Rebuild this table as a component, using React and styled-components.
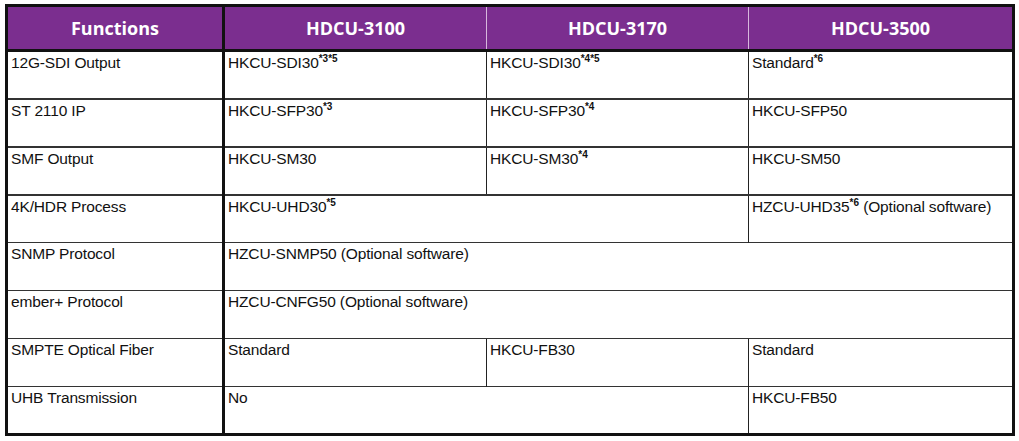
import React from "react";
import styled, { createGlobalStyle } from "styled-components";

const GlobalStyle = createGlobalStyle`
  html, body {
    margin: 0;
    padding: 0;
    background: #ffffff;
  }
  body {
    font-family: "Liberation Sans", Arial, sans-serif;
  }
`;

const Page = styled.div`
  padding: 4px 0 0 5px;
`;

const Table = styled.table`
  width: 1007px;
  border-collapse: collapse;
  table-layout: fixed;
  border: 3px solid #111;
`;

const HeadCell = styled.th`
  height: 42px;
  padding: 0;
  background: #7b2e8f;
  color: #ffffff;
  font-family: "Open Sans", "Liberation Sans", sans-serif;
  font-size: 18px;
  font-weight: 700;
  text-align: center;
  vertical-align: middle;
  border-bottom: 3px solid #111;
  border-left: ${(p) => (p.$first ? "3px solid #111" : "1px solid #d7b8dd")};
`;

const Row = styled.tr`
  height: 48px;
`;

const Cell = styled.td`
  padding: 2px 0 0 3px;
  vertical-align: top;
  font-size: 15.5px;
  letter-spacing: -0.15px;
  color: #111;
  border-top: ${(p) => (p.$heavy ? "2px" : "1px")} solid #333;
  border-left: ${(p) => (p.$divider ? "3px solid #111" : "1px solid #222")};
  white-space: nowrap;
`;

const Note = styled.sup`
  font-size: 10px;
  font-weight: 700;
  line-height: 0;
  letter-spacing: 0;
`;

const rows = [
  { name: "12G-SDI Output", heavy: true, cells: [
    { text: "HKCU-SDI30", note: "*3*5" },
    { text: "HKCU-SDI30", note: "*4*5" },
    { text: "Standard", note: "*6" },
  ] },
  { name: "ST 2110 IP", heavy: true, cells: [
    { text: "HKCU-SFP30", note: "*3" },
    { text: "HKCU-SFP30", note: "*4" },
    { text: "HKCU-SFP50" },
  ] },
  { name: "SMF Output", heavy: true, cells: [
    { text: "HKCU-SM30" },
    { text: "HKCU-SM30", note: "*4" },
    { text: "HKCU-SM50" },
  ] },
  { name: "4K/HDR Process", heavy: true, cells: [
    { text: "HKCU-UHD30", note: "*5", span: 2 },
    { text: "HZCU-UHD35", note: "*6", after: " (Optional software)" },
  ] },
  { name: "SNMP Protocol", cells: [
    { text: "HZCU-SNMP50 (Optional software)", span: 3 },
  ] },
  { name: "ember+ Protocol", cells: [
    { text: "HZCU-CNFG50 (Optional software)", span: 3 },
  ] },
  { name: "SMPTE Optical Fiber", cells: [
    { text: "Standard" },
    { text: "HKCU-FB30" },
    { text: "Standard" },
  ] },
  { name: "UHB Transmission", cells: [
    { text: "No", span: 2 },
    { text: "HKCU-FB50" },
  ] },
];

export default function App() {
  return (
    <Page>
      <GlobalStyle />
      <Table>
        <colgroup>
          <col style={{ width: 217 }} />
          <col style={{ width: 263 }} />
          <col style={{ width: 262 }} />
          <col style={{ width: 265 }} />
        </colgroup>
        <thead>
          <tr>
            <HeadCell>Functions</HeadCell>
            <HeadCell $first>HDCU-3100</HeadCell>
            <HeadCell>HDCU-3170</HeadCell>
            <HeadCell>HDCU-3500</HeadCell>
          </tr>
        </thead>
        <tbody>
          {rows.map((row) => (
            <Row key={row.name}>
              <Cell $heavy={row.heavy}>{row.name}</Cell>
              {row.cells.map((c, i) => (
                <Cell
                  key={i}
                  colSpan={c.span || 1}
                  $divider={i === 0}
                  $heavy={row.heavy}
                >
                  {c.text}
                  {c.note && <Note>{c.note}</Note>}
                  {c.after}
                </Cell>
              ))}
            </Row>
          ))}
        </tbody>
      </Table>
    </Page>
  );
}
